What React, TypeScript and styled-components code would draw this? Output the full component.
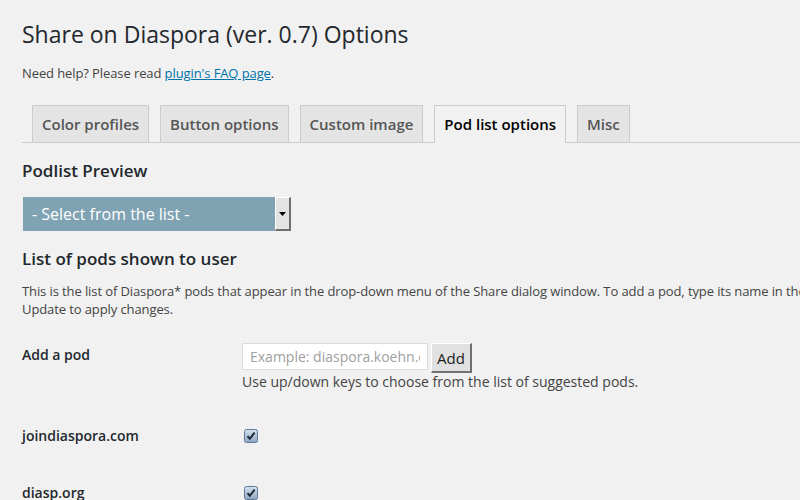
import React from "react";
import styled, { createGlobalStyle } from "styled-components";

const Global = createGlobalStyle`
  html, body { margin: 0; padding: 0; background: #f1f1f1; }
  body { font-family: "Open Sans", "Noto Sans", sans-serif; color: #444; overflow: hidden; }
`;

const Wrap = styled.div`
  padding: 19px 0 0 22px;
  width: 778px;
  overflow: hidden;
`;

const Title = styled.h1`
  margin: 0;
  font-size: 23px;
  line-height: 30px;
  font-weight: 400;
  color: #23282d;
`;

const Help = styled.p`
  margin: 15px 0 0;
  font-size: 13px;
  line-height: 19px;
  letter-spacing: -0.1px;
  color: #444;
  a { color: #0073aa; text-decoration: underline; }
`;

const Tabs = styled.div`
  display: flex;
  gap: 11px;
  margin-top: 22px;
  padding-left: 10px;
  border-bottom: 1px solid #ccc;
  margin-right: -22px;
`;

const Tab = styled.div<{ $active?: boolean }>`
  box-sizing: border-box;
  height: 38px;
  margin-bottom: -1px;
  padding: 0 9px;
  display: flex;
  align-items: center;
  font-size: 15px;
  font-weight: 600;
  border: 1px solid #ccc;
  border-bottom: 1px solid ${(p) => (p.$active ? "#f1f1f1" : "#ccc")};
  background: ${(p) => (p.$active ? "#f1f1f1" : "#e4e4e4")};
  color: ${(p) => (p.$active ? "#000" : "#555")};
`;

const H2 = styled.h2`
  margin: 0;
  font-size: 17px;
  line-height: 24px;
  font-weight: 600;
  color: #23282d;
`;

const Section = styled.div<{ $top: number }>`
  margin-top: ${(p) => p.$top}px;
`;

const SelectBox = styled.div`
  display: flex;
  width: 268px;
  height: 34px;
  margin-top: 14px;
  margin-left: 1px;
`;

const SelectValue = styled.div`
  flex: 1;
  background: #7fa3b3;
  color: #fff;
  font-size: 16px;
  display: flex;
  align-items: center;
  padding-left: 9px;
`;

const SelectArrow = styled.div`
  box-sizing: border-box;
  width: 16px;
  background: #e3e3e3;
  border-top: 1px solid #fff;
  border-left: 1px solid #fff;
  border-right: 2px solid #6e6e6e;
  border-bottom: 2px solid #6e6e6e;
  display: flex;
  align-items: center;
  justify-content: center;
`;

const Desc = styled.p`
  margin: 11px 0 0;
  font-size: 13px;
  line-height: 18px;
  letter-spacing: -0.1px;
  white-space: nowrap;
  color: #444;
`;

const Row = styled.div<{ $top: number }>`
  display: grid;
  grid-template-columns: 220px 1fr;
  margin-top: ${(p) => p.$top}px;
`;

const Label = styled.div<{ $pad?: number }>`
  padding-top: ${(p) => p.$pad ?? 0}px;
  font-size: 14px;
  font-weight: 600;
  color: #23282d;
  line-height: 20px;
`;

const Field = styled.div`
  display: flex;
  flex-direction: column;
`;

const InputLine = styled.div`
  display: flex;
  gap: 3px;
  align-items: flex-start;
`;

const Input = styled.input`
  box-sizing: border-box;
  width: 186px;
  height: 27px;
  border: 1px solid #ddd;
  background: #fff;
  font-family: inherit;
  font-size: 14px;
  padding: 0 7px;
  outline: none;
  &::placeholder { color: #a0a0a0; }
`;

const AddButton = styled.button`
  box-sizing: border-box;
  height: 30px;
  padding: 0 5px;
  background: #e1e1e1;
  border-top: 1px solid #fff;
  border-left: 1px solid #fff;
  border-right: 2px solid #707070;
  border-bottom: 2px solid #707070;
  font-family: inherit;
  font-size: 15px;
  color: #222;
`;

const Hint = styled.div`
  margin-top: -1px;
  font-size: 14px;
  line-height: 20px;
  color: #444;
`;

const Check = styled.span`
  display: inline-flex;
  margin-left: 2px;
  margin-top: 3px;
`;

const CheckIcon = () => (
  <svg width="14" height="14" viewBox="0 0 14 14">
    <defs>
      <linearGradient id="cb" x1="0" y1="0" x2="0" y2="1">
        <stop offset="0" stopColor="#d6e2ee" />
        <stop offset="1" stopColor="#8aa6c2" />
      </linearGradient>
    </defs>
    <rect x="0.5" y="0.5" width="13" height="13" rx="2" fill="url(#cb)" stroke="#5d7b99" />
    <path d="M3.5 7.2 L5.8 9.8 L10.6 3.6" fill="none" stroke="#1d2836" strokeWidth="2" />
  </svg>
);

export default function App() {
  return (
    <>
      <Global />
      <Wrap>
        <Title>Share on Diaspora (ver. 0.7) Options</Title>
        <Help>
          Need help? Please read <a href="#">plugin's FAQ page</a>.
        </Help>
        <Tabs>
          <Tab>Color profiles</Tab>
          <Tab>Button options</Tab>
          <Tab>Custom image</Tab>
          <Tab $active>Pod list options</Tab>
          <Tab>Misc</Tab>
        </Tabs>
        <Section $top={16}>
          <H2>Podlist Preview</H2>
          <SelectBox>
            <SelectValue>- Select from the list -</SelectValue>
            <SelectArrow>
              <svg width="7" height="4" viewBox="0 0 7 4">
                <path d="M0 0 H7 L3.5 4 Z" fill="#000" />
              </svg>
            </SelectArrow>
          </SelectBox>
        </Section>
        <Section $top={16}>
          <H2>List of pods shown to user</H2>
          <Desc>
            This is the list of Diaspora* pods that appear in the drop-down menu of the Share dialog window. To add a pod, type its name in the field below and click Add.
            <br />
            Update to apply changes.
          </Desc>
        </Section>
        <Row $top={25}>
          <Label $pad={2}>Add a pod</Label>
          <Field>
            <InputLine>
              <Input placeholder="Example: diaspora.koehn.com" />
              <AddButton>Add</AddButton>
            </InputLine>
            <Hint>Use up/down keys to choose from the list of suggested pods.</Hint>
          </Field>
        </Row>
        <Row $top={34}>
          <Label>joindiaspora.com</Label>
          <Check><CheckIcon /></Check>
        </Row>
        <Row $top={37}>
          <Label>diasp.org</Label>
          <Check><CheckIcon /></Check>
        </Row>
      </Wrap>
    </>
  );
}
